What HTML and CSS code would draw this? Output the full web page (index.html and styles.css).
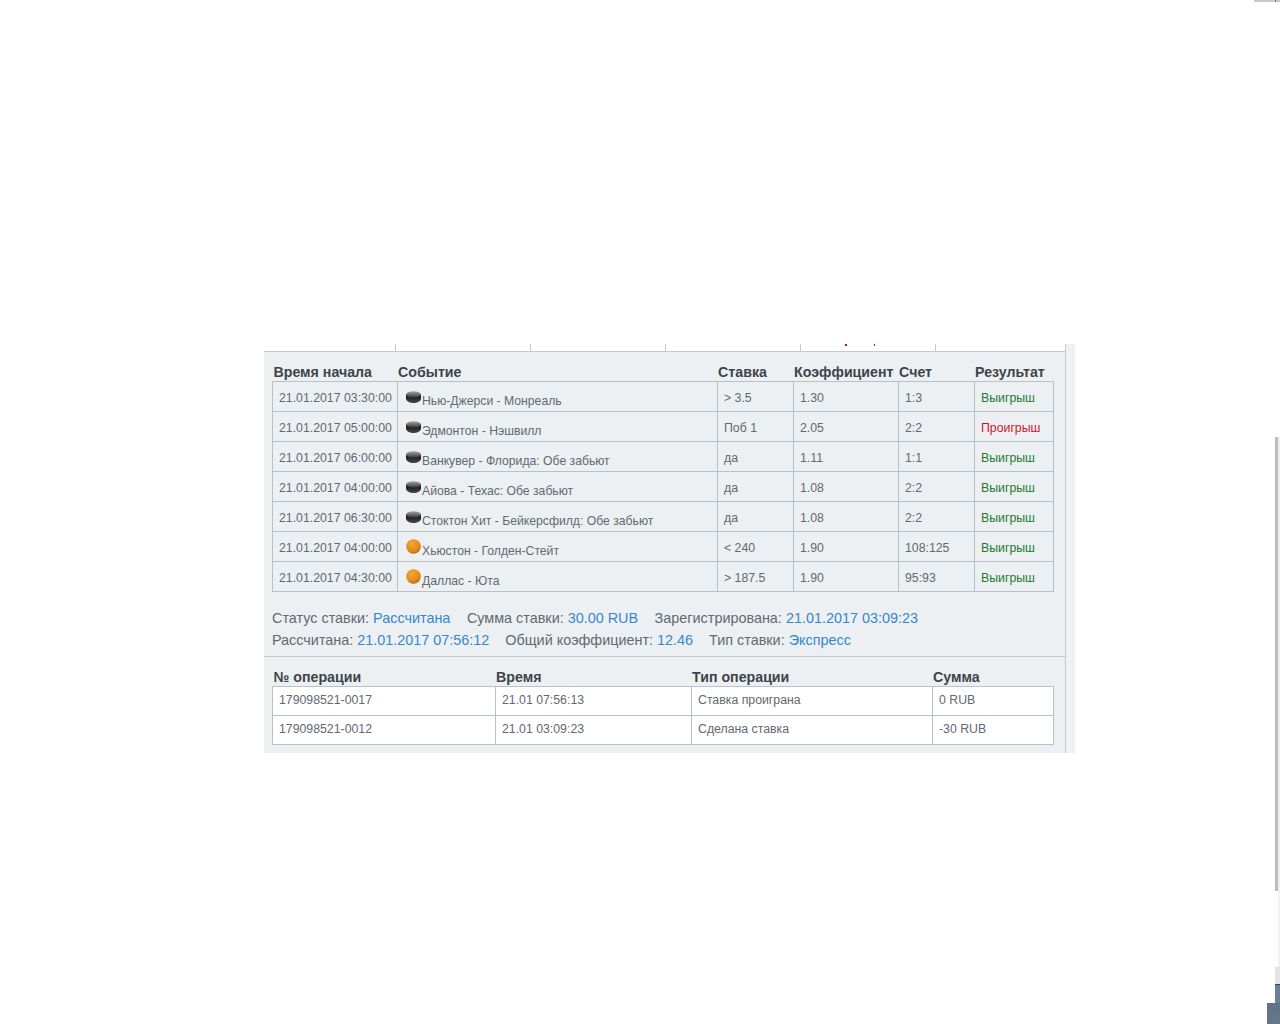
FILE: index.html
```html
<!DOCTYPE html>
<html lang="ru">
<head>
<meta charset="utf-8">
<title>Ставка</title>
<link rel="stylesheet" href="styles.css">
</head>
<body>
<svg class="defs" width="0" height="0" aria-hidden="true">
  <defs>
    <linearGradient id="puckTop" x1="0" y1="0" x2="0" y2="1"><stop offset="0" stop-color="#a5a5a5"/><stop offset="1" stop-color="#333"/></linearGradient>
    <linearGradient id="puckSide" x1="0" y1="0" x2="0" y2="1"><stop offset="0" stop-color="#0c0c0c"/><stop offset="1" stop-color="#4a4a4a"/></linearGradient>
    <radialGradient id="ball" cx=".4" cy=".3" r=".8"><stop offset="0" stop-color="#f2a93a"/><stop offset=".65" stop-color="#e08a18"/><stop offset="1" stop-color="#a35a0e"/></radialGradient>
    <symbol id="puck" viewBox="0 0 15 12">
      <path d="M0 3.500v4C0 10 3.500 12 7.500 12S15 10 15 7.500v-4z" fill="url(#puckSide)"/>
      <ellipse cx="7.500" cy="3.500" rx="7.500" ry="3.300" fill="url(#puckTop)"/>
    </symbol>
    <symbol id="basket" viewBox="0 0 15 15">
      <circle cx="7.500" cy="7.500" r="7.300" fill="url(#ball)"/>
    </symbol>
  </defs>
</svg>
<div class="scrollbar-top"><span class="scrollbar-tick"></span></div>
<div class="scrollbar-track"></div>
<div class="scrollbar-thumb"></div>
<div class="corner-gap"></div>
<div class="corner-top"></div>
<div class="corner"></div>
<main class="wrap">
  <div class="tabs-edge"><span class="dots"></span></div>
  <section class="panel">
    <table class="grid bets">
      <colgroup><col class="c1"><col class="c2"><col class="c3"><col class="c4"><col class="c5"><col class="c6"></colgroup>
      <thead><tr><th>Время начала</th><th>Событие</th><th>Ставка</th><th>Коэффициент</th><th>Счет</th><th>Результат</th></tr></thead>
      <tbody>
        <tr><td>21.01.2017 03:30:00</td><td class="ev"><svg class="ic"><use href="#puck"/></svg>Нью-Джерси - Монреаль</td><td>&gt; 3.5</td><td>1.30</td><td>1:3</td><td class="win">Выигрыш</td></tr>
        <tr><td>21.01.2017 05:00:00</td><td class="ev"><svg class="ic"><use href="#puck"/></svg>Эдмонтон - Нэшвилл</td><td>Поб 1</td><td>2.05</td><td>2:2</td><td class="lose">Проигрыш</td></tr>
        <tr><td>21.01.2017 06:00:00</td><td class="ev"><svg class="ic"><use href="#puck"/></svg>Ванкувер - Флорида: Обе забьют</td><td>да</td><td>1.11</td><td>1:1</td><td class="win">Выигрыш</td></tr>
        <tr><td>21.01.2017 04:00:00</td><td class="ev"><svg class="ic"><use href="#puck"/></svg>Айова - Техас: Обе забьют</td><td>да</td><td>1.08</td><td>2:2</td><td class="win">Выигрыш</td></tr>
        <tr><td>21.01.2017 06:30:00</td><td class="ev"><svg class="ic"><use href="#puck"/></svg>Стоктон Хит - Бейкерсфилд: Обе забьют</td><td>да</td><td>1.08</td><td>2:2</td><td class="win">Выигрыш</td></tr>
        <tr><td>21.01.2017 04:00:00</td><td class="ev"><svg class="ic ball"><use href="#basket"/></svg>Хьюстон - Голден-Стейт</td><td>&lt; 240</td><td>1.90</td><td>108:125</td><td class="win">Выигрыш</td></tr>
        <tr><td>21.01.2017 04:30:00</td><td class="ev"><svg class="ic ball"><use href="#basket"/></svg>Даллас - Юта</td><td>&gt; 187.5</td><td>1.90</td><td>95:93</td><td class="win">Выигрыш</td></tr>
      </tbody>
    </table>
    <div class="summary">
      <p><span>Статус ставки: <b>Рассчитана</b></span><span>Сумма ставки: <b>30.00 RUB</b></span><span>Зарегистрирована: <b>21.01.2017 03:09:23</b></span></p>
      <p><span>Рассчитана: <b>21.01.2017 07:56:12</b></span><span>Общий коэффициент: <b>12.46</b></span><span>Тип ставки: <b>Экспресс</b></span></p>
    </div>
    <table class="grid ops">
      <colgroup><col class="o1"><col class="o2"><col class="o3"><col class="o4"></colgroup>
      <thead><tr><th>№ операции</th><th>Время</th><th>Тип операции</th><th>Сумма</th></tr></thead>
      <tbody>
        <tr><td>179098521-0017</td><td>21.01 07:56:13</td><td>Ставка проиграна</td><td>0 RUB</td></tr>
        <tr><td>179098521-0012</td><td>21.01 03:09:23</td><td>Сделана ставка</td><td>-30 RUB</td></tr>
      </tbody>
    </table>
  </section>
</main>
</body>
</html>
```
FILE: styles.css
```css
html, body { margin: 0; padding: 0; background: #fff; }
body { font-family: "Liberation Sans", Arial, sans-serif; color: #62696f; overflow: hidden; height: 1024px; }
.defs { position: absolute; }
.wrap { width: 811px; margin-left: 264px; padding-top: 344px; box-sizing: border-box; }
.tabs-edge {
  height: 7px; width: 801px; border-bottom: 1px solid #c3c9cd; position: relative;
  background:
    linear-gradient(#c3c9cd, #c3c9cd) 131px 0/1px 7px no-repeat,
    linear-gradient(#c3c9cd, #c3c9cd) 266px 0/1px 7px no-repeat,
    linear-gradient(#c3c9cd, #c3c9cd) 401px 0/1px 7px no-repeat,
    linear-gradient(#c3c9cd, #c3c9cd) 536px 0/1px 7px no-repeat,
    linear-gradient(#c3c9cd, #c3c9cd) 671px 0/1px 7px no-repeat;
  border-right: 1px solid #c3c9cd;
  box-shadow: 9px 0 0 #f1f1f1;
}
.dots {
  position: absolute; left: 581px; top: 0; width: 30px; height: 2px;
  background:
    linear-gradient(#d0021b, #d0021b) 0 0/2px 2px no-repeat,
    linear-gradient(#d0021b, #d0021b) 29px 0/2px 2px no-repeat;
}
.panel {
  box-sizing: border-box; width: 811px; height: 401px;
  background: #edf0f3; border-right: 9px solid #f1f1f1;
  box-shadow: inset -1px 0 0 #c3c9cd;
  padding: 11px 0 0 8px;
}
.grid { border-collapse: collapse; table-layout: fixed; width: 781px; font-size: 12.3px; }
.grid th {
  text-align: left; font-size: 14.2px; font-weight: bold; color: #3d444b;
  padding: 0 0 0 0.6px; height: 18px; line-height: 16px; white-space: nowrap;
}
.grid th:first-child { padding-left: 1px; }
.grid td { border: 1px solid #b9c1c7; padding: 0 6px; white-space: nowrap; vertical-align: middle; }
.bets td { box-sizing: border-box; height: 30px; padding-top: 2px; padding-bottom: 0; }
.ev .ic { width: 15px; height: 12px; margin: 0 1px 0 0; vertical-align: 2px; }
.ev .ball { height: 15px; margin-top: -2px; margin-bottom: -1px; vertical-align: 2px; }
.bets .ev { padding-left: 8px; line-height: 12px; padding-top: 5px; padding-bottom: 0; font-size: 12.2px; }
.win { color: #1f7a30; }
.lose { color: #d0142c; }
.c1 { width: 125px; } .c2 { width: 320px; } .c3 { width: 76px; }
.c4 { width: 105px; } .c5 { width: 76px; } .c6 { width: 79px; }
.summary { box-sizing: border-box; width: 801px; height: 50px; margin: 15px 0 0 -8px; padding-left: 8px; font-size: 14.4px; border-bottom: 1px solid #c3c9cd; }
.summary p { margin: 0; line-height: 22px; display: flex; gap: 16.500px; }
.summary p + p { gap: 16px; }
.summary b { font-weight: normal; color: #3388cc; }
.ops { margin-top: 11px; }
.ops td { background: #fff; height: 29px; box-sizing: border-box; padding-bottom: 2px; }
.o1 { width: 223px; } .o2 { width: 196px; } .o3 { width: 241px; } .o4 { width: 121px; }
.scrollbar-top { position: absolute; left: 1254px; top: 0; width: 26px; height: 2px; background: #c9c9c9; }
.scrollbar-tick { position: absolute; left: 21px; top: 0; width: 1px; height: 2px; background: #777; }
.scrollbar-track { position: absolute; left: 1278px; top: 437px; width: 2px; height: 530px; background: #f1f1f1; }
.scrollbar-thumb { position: absolute; left: 1275px; top: 437px; width: 3px; height: 454px; background: #bdbdbd; }
.corner-gap { position: absolute; left: 1275px; top: 967px; width: 5px; height: 17px; background: #e4e4e4; }
.corner-top { position: absolute; left: 1275px; top: 984px; width: 5px; height: 19px; background: #6d7f93; border-top: 1px solid #3c4652; box-sizing: border-box; }
.corner { position: absolute; left: 1267px; top: 1003px; width: 13px; height: 21px; background: linear-gradient(#5f7388, #64768a); }
```
